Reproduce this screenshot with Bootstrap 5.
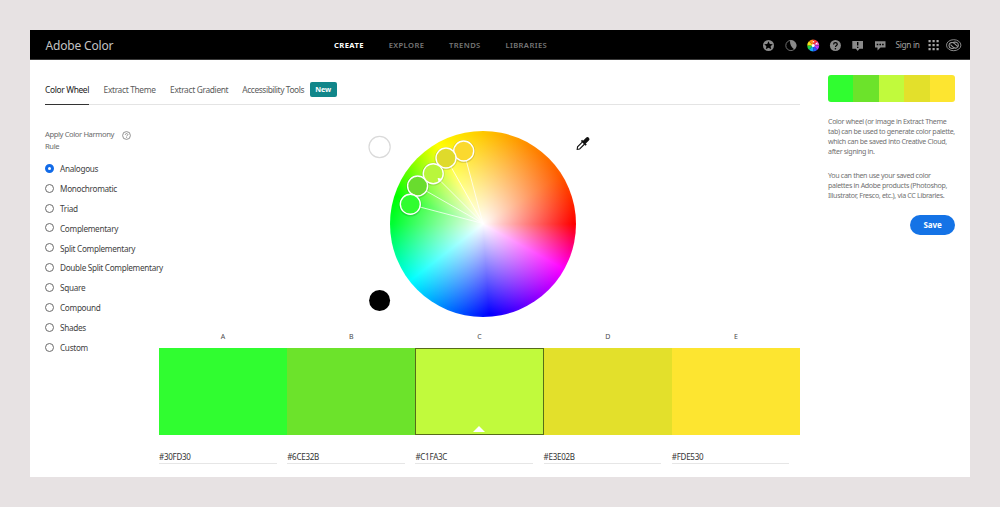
<!DOCTYPE html>
<html lang="en">
<head>
<meta charset="utf-8">
<meta name="viewport" content="width=device-width, initial-scale=1">
<title>Adobe Color</title>
<link href="https://cdn.jsdelivr.net/npm/bootstrap@5.3.0/dist/css/bootstrap.min.css" rel="stylesheet">
<style>
body{background:#e7e2e3;font-family:"Noto Sans","Open Sans",sans-serif;font-size:8.2px;color:#4b4b4b;height:507px;overflow:hidden;padding:30px}
.app{height:447px}
.topbar{height:30px;background:#000;border-bottom:1px solid #3a3a3a;padding:0 8px 0 15px;display:grid;grid-template-columns:289px 1fr auto}
.brand{font-size:12px;color:#c4c4c4;letter-spacing:-.17px;padding:2px 0 0 .5px}
.mainmenu{gap:24.7px;font-size:7.6px;font-weight:600;letter-spacing:.41px;color:#777;padding-top:2px}
.mainmenu .text-white{font-weight:700}
.sheet{padding:0 15px;gap:28px}
.main{width:755px}
.tabs{height:45px;gap:14.5px;border-bottom:1px solid #e4e4e4;font-size:8.4px;letter-spacing:-.34px;color:#5b5b5b}
.tabs .tab{line-height:44px;height:45px;padding-top:8px;white-space:nowrap}
.tabs .tab:nth-child(4){letter-spacing:-.42px;margin-left:-.5px}
.tab.on{color:#222;border-bottom:1.5px solid #333}
.new{background:#11868a;color:#fff;font-weight:700;font-size:7.2px;letter-spacing:-.1px;width:27px;height:15px;line-height:15px;border-radius:2px;text-align:center;margin:22px 0 0 -9px}
.rules{width:114px;padding-top:22.5px}
.rulehead{font-size:7.6px;line-height:12.2px;letter-spacing:-.39px;color:#6b6b6b;height:32px}
.helpmark{margin:3.5px 28px 0 0}
.rule{height:19.85px;gap:6px;white-space:nowrap;letter-spacing:-.3px;color:#3f3f3f}
.dot{width:9px;height:9px;border:1px solid #6c6c6c;border-radius:50%;flex:none;margin-top:-2px}
.dot.on{border:3px solid #126be8}
.work{width:641px}
.stage{height:227px;position:relative}
.wheel{position:absolute;left:231px;top:25.5px;width:186px;height:186px;border-radius:50%;background:radial-gradient(circle closest-side,#fff 0,rgba(255,255,255,.8) 18%,rgba(255,255,255,.52) 45%,rgba(255,255,255,.22) 75%,rgba(255,255,255,0) 97%),conic-gradient(from 90deg,#f00 0,#f0f 29deg,#00f 86deg,#0ff 142deg,#0f3 180deg,#0f0 198deg,#ff0 240deg,#fc0 268deg,#ff8c00 300deg,#ff5a00 328deg,#f00 360deg)}
.overlay{position:absolute;inset:0}
.slots{display:grid;grid-template-columns:repeat(5,1fr)}
.letter{height:16px;line-height:10px;font-size:7px;text-align:center}
.chip{height:86.5px;position:relative}
.chip.on{outline:1px solid #566d18;outline-offset:-1px}
.chip.on:after{content:"";position:absolute;left:58px;bottom:3px;border:6px solid transparent;border-top:0;border-bottom:6px solid #fff}
.hex{font-size:8px;height:14.5px;line-height:14px;margin:15px 10.5px 0 0;border-bottom:1px solid #e6e6e6;letter-spacing:-.26px;color:#333}
.side{width:127px;padding-top:15px;font-size:7.1px;line-height:10px;letter-spacing:-.33px;color:#717171;white-space:nowrap}
.side p{margin:14.500px 0 0}
.side .strip+p{margin-top:14px}
.strip{height:26.5px;border-radius:3px;overflow:hidden}
.saverow{margin-top:15px}
.save{background:#1473e6;color:#fff;font-weight:700;font-size:8px;line-height:20px;width:45px;height:20px;padding:0;border:0;letter-spacing:-.1px;vertical-align:top}
.c1{background:#30fd30}.c2{background:#6ce32b}.c3{background:#c1fa3c}.c4{background:#e3e02b}.c5{background:#fde530}
</style>
</head>
<body>
<div class="app bg-white">
<header class="topbar align-items-center">
 <div class="brand">Adobe Color</div>
 <nav class="mainmenu d-flex"><span class="text-white">CREATE</span><span>EXPLORE</span><span>TRENDS</span><span>LIBRARIES</span></nav>
 <div class="d-flex align-items-center">
 <svg width="200" height="20" viewBox="762 35 200 20">
  <g fill="#8a8a8a">
   <circle cx="768.5" cy="45.5" r="5.5"/>
   <path fill="#000" d="M768.5 41.200l1.300 2.800 3 .3-2.200 2 .6 3-2.700-1.500-2.700 1.500.6-3-2.200-2 3-.3z"/>
   <circle cx="790.900" cy="45.500" r="5.100" fill="none" stroke="#777" stroke-width=".9"/>
   <path d="M790 40.300a5.200 5.200 0 0 1 4.400 9.100C791.500 47.700 789.700 44.500 790 40.300z"/>
   <circle cx="835.400" cy="45.500" r="5.500"/>
   <path d="M833.600 44.400c0-2.500 3.700-2.300 3.700-.2 0 1.300-1.800 1.300-1.800 2.700" fill="none" stroke="#000" stroke-width="1.200"/><circle cx="835.400" cy="48.700" r=".8" fill="#000"/>
   <path d="M852.300 41h10.700v7.800h-3.500l-1.800 2.200-1.800-2.200h-3.600z"/>
   <path d="M857.700 42v3.600M857.700 46.700v1.300" stroke="#000" stroke-width="1.400"/>
   <path d="M875 41.300h10.500v6.200h-5l-3 3v-3H875z"/>
   <path d="M876.700 44.500h1.600m1.100 0h1.600m1.100 0h1.600" stroke="#000" stroke-width="1.500"/>
  </g>
  <text x="895.500" y="48.300" font-size="8.300" fill="#a0a0a0" textLength="24.500">Sign in</text>
  <path fill="#a8a8a8" d="M928.500 40h2.200v2.200h-2.200zM932.500 40h2.200v2.200h-2.200zM936.500 40h2.200v2.200h-2.200zM928.500 44h2.200v2.200h-2.200zM932.500 44h2.200v2.200h-2.200zM936.500 44h2.200v2.200h-2.200zM928.500 48h2.200v2.200h-2.200zM932.500 48h2.200v2.200h-2.200zM936.500 48h2.200v2.200h-2.200z"/>
  <g fill="none" stroke="#989898"><ellipse cx="953.700" cy="45.200" rx="7.200" ry="5.500" stroke-width=".9"/><path d="M954.800 47.600c-2 1.700-5.800.8-5.800-2.200 0-2.900 3.500-3.800 5.300-2l3.200 3M952.600 43c2-1.700 5.800-.8 5.800 2.200 0 2.900-3.500 3.800-5.300 2l-2.600-2.500" stroke-width="1.100"/></g>
  <g transform="translate(813.200 45.500)">
   <path fill="#f33" d="M0 0L0-6A6 6 0 0 1 4.240-4.240z"/><path fill="#f55fc0" d="M0 0L4.240-4.240A6 6 0 0 1 6 0z"/><path fill="#b23cff" d="M0 0L6 0A6 6 0 0 1 4.240 4.240z"/><path fill="#2855ff" d="M0 0L4.240 4.240A6 6 0 0 1 0 6z"/><path fill="#18aaf5" d="M0 0L0 6A6 6 0 0 1-4.240 4.240z"/><path fill="#21d34a" d="M0 0L-4.240 4.240A6 6 0 0 1-6 0z"/><path fill="#f7e51b" d="M0 0L-6 0A6 6 0 0 1-4.240-4.240z"/><path fill="#ff8a1c" d="M0 0L-4.240-4.240A6 6 0 0 1 0-6z"/><circle r="1.500" fill="#fff"/><circle cx=".3" cy="-3.800" r=".8" fill="#fff"/><circle cx="3.300" cy="-2" r=".8" fill="#fff"/>
  </g>
 </svg>
 </div>
</header>
<div class="sheet d-flex">
 <main class="main">
  <div class="tabs d-flex"><div class="tab on">Color Wheel</div><div class="tab">Extract Theme</div><div class="tab">Extract Gradient</div><div class="tab">Accessibility Tools</div><div class="new">New</div></div>
  <div class="d-flex">
   <section class="rules">
    <div class="rulehead d-flex justify-content-between"><div>Apply Color Harmony<br>Rule</div>
     <svg class="helpmark" width="9" height="9" viewBox="0 0 9 9" fill="none" stroke="#777"><circle cx="4.500" cy="4.500" r="3.900" stroke-width=".8"/><path d="M3.300 3.800c0-1.700 2.500-1.600 2.500-.1 0 .8-1.200.8-1.200 1.700M4.600 6v.8" stroke-width=".8"/></svg></div>
    <div class="rulelist">
     <div class="rule d-flex align-items-center"><i class="dot on"></i>Analogous</div>
     <div class="rule d-flex align-items-center"><i class="dot"></i>Monochromatic</div>
     <div class="rule d-flex align-items-center"><i class="dot"></i>Triad</div>
     <div class="rule d-flex align-items-center"><i class="dot"></i>Complementary</div>
     <div class="rule d-flex align-items-center"><i class="dot"></i>Split Complementary</div>
     <div class="rule d-flex align-items-center"><i class="dot"></i>Double Split Complementary</div>
     <div class="rule d-flex align-items-center"><i class="dot"></i>Square</div>
     <div class="rule d-flex align-items-center"><i class="dot"></i>Compound</div>
     <div class="rule d-flex align-items-center"><i class="dot"></i>Shades</div>
     <div class="rule d-flex align-items-center"><i class="dot"></i>Custom</div>
    </div>
   </section>
   <section class="work">
    <div class="stage">
     <div class="wheel"></div>
     <svg class="overlay" width="641" height="227" viewBox="159 105 641 227">
      <circle cx="379.600" cy="147" r="10.600" fill="#fff" stroke="#dadada" stroke-width="1.200"/>
      <circle cx="379.600" cy="300.500" r="10.500"/>
      <g stroke="#fff" stroke-opacity=".75" stroke-width="1"><path d="M483 223.500L463.700 151M483 223.500L446 158M483 223.500L433 173.500M483 223.500L417.500 186M483 223.500L410.300 204.500"/></g>
      <g stroke="#000" stroke-opacity=".12" stroke-width="3" fill="none"><circle cx="463.700" cy="151.500" r="10"/><circle cx="446" cy="158.500" r="10"/><circle cx="433.200" cy="174" r="10"/><circle cx="417.600" cy="186.500" r="10"/><circle cx="410.300" cy="205" r="10"/></g>
      <g stroke="#fff" stroke-width="1.400"><circle cx="463.700" cy="151" r="10" fill="#fbd92e"/><circle cx="446" cy="158" r="10" fill="#dfda2b"/><circle cx="417.600" cy="186" r="10" fill="#69dc2e"/><circle cx="410.300" cy="204.300" r="10" fill="#30fd30"/><circle cx="433.200" cy="173.700" r="10" fill="#b9f63b"/></g>
      <path d="M438 178.500l3.600.8-2.300 2.300z" fill="#fff" stroke="#fff"/>
      <g transform="translate(582.500 144) rotate(45)"><path d="M-1.500-1.500V5.500L0 7.500 1.500 5.500V-1.500" fill="#fff" stroke="#111" stroke-width="1.100"/><path d="M-3.300-2.700h6.600v1.700h-6.600zM-2-7a2 2 0 0 1 4 0v5h-4z" fill="#111"/></g>
     </svg>
    </div>
    <div class="slots">
     <div><div class="letter">A</div><div class="chip c1"></div><div class="hex">#30FD30</div></div>
     <div><div class="letter">B</div><div class="chip c2"></div><div class="hex">#6CE32B</div></div>
     <div><div class="letter">C</div><div class="chip c3 on"></div><div class="hex">#C1FA3C</div></div>
     <div><div class="letter">D</div><div class="chip c4"></div><div class="hex">#E3E02B</div></div>
     <div><div class="letter">E</div><div class="chip c5"></div><div class="hex">#FDE530</div></div>
    </div>
   </section>
  </div>
 </main>
 <aside class="side">
  <div class="strip d-flex"><div class="c1 flex-fill"></div><div class="c2 flex-fill"></div><div class="c3 flex-fill"></div><div class="c4 flex-fill"></div><div class="c5 flex-fill"></div></div>
  <p>Color wheel (or image in Extract Theme<br>tab) can be used to generate color palette,<br>which can be saved into Creative Cloud,<br>after signing in.</p>
  <p>You can then use your saved color<br>palettes in Adobe products (Photoshop,<br>Illustrator, Fresco, etc.), via CC Libraries.</p>
  <div class="text-end saverow"><button class="btn rounded-pill save">Save</button></div>
 </aside>
</div>
</div>
<script src="https://cdn.jsdelivr.net/npm/bootstrap@5.3.0/dist/js/bootstrap.bundle.min.js"></script>
</body>
</html>
